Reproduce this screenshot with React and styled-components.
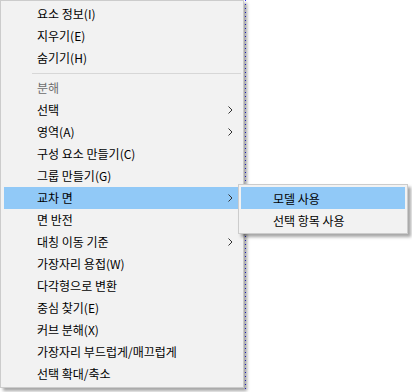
import React from "react";
import styled, { createGlobalStyle } from "styled-components";

const items = [
  { label: "요소 정보(I)" },
  { label: "지우기(E)" },
  { label: "숨기기(H)" },
  { separator: true },
  { label: "분해", disabled: true },
  { label: "선택", sub: true },
  { label: "영역(A)", sub: true },
  { label: "구성 요소 만들기(C)" },
  { label: "그룹 만들기(G)" },
  { label: "교차 면", sub: true, active: true },
  { label: "면 반전" },
  { label: "대칭 이동 기준", sub: true },
  { label: "가장자리 용접(W)" },
  { label: "다각형으로 변환" },
  { label: "중심 찾기(E)" },
  { label: "커브 분해(X)" },
  { label: "가장자리 부드럽게/매끄럽게" },
  { label: "선택 확대/축소" },
];

const subItems = [
  { label: "모델 사용", active: true },
  { label: "선택 항목 사용" },
];

const Chevron = () => (
  <svg width="5" height="8" viewBox="0 0 5 8">
    <polyline points="0.5,0.5 4,4 0.5,7.5" fill="none" stroke="#333" strokeWidth="1" />
  </svg>
);

const App = () => {
  return (
    <>
      <GlobalStyle />
      <Stage>
        <Menu>
          {items.map((item, i) =>
            item.separator ? (
              <Separator key={i} />
            ) : (
              <Item key={i} active={item.active} disabled={item.disabled}>
                <span>{item.label}</span>
                {item.sub && <Chevron />}
              </Item>
            )
          )}
        </Menu>
        <SubMenu>
          {subItems.map((item) => (
            <SubItem key={item.label} active={item.active}>
              {item.label}
            </SubItem>
          ))}
        </SubMenu>
      </Stage>
    </>
  );
};

export default App;

const GlobalStyle = createGlobalStyle`
  html, body {
    margin: 0;
    padding: 0;
    background: #ffffff;
  }
  body {
    font-family: "Noto Sans CJK KR", "Noto Sans", sans-serif;
    font-size: 12px;
  }
`;

const Stage = styled.div`
  position: relative;
  width: 412px;
  height: 392px;
  overflow: hidden;
  background:
    repeating-linear-gradient(to bottom, #2a2aff 0 1px, transparent 1px 4px) 245px 0 / 1px 100% no-repeat,
    #ffffff;
`;

const Menu = styled.div`
  box-sizing: border-box;
  width: 244px;
  height: 388px;
  padding: 2px 2px 2px 3px;
  background: #f2f2f2;
  border: 1px solid #cccccc;
  box-shadow: 3px 3px 3px rgba(0, 0, 0, 0.35);
  display: flex;
  flex-direction: column;
`;

const Item = styled.div`
  height: 22px;
  flex-shrink: 0;
  display: flex;
  align-items: center;
  justify-content: space-between;
  padding: 0 8px 0 33px;
  color: ${({ disabled }) => (disabled ? "#6d6d6d" : "#000000")};
  background: ${({ active }) => (active ? "#91c9f7" : "transparent")};
  white-space: nowrap;
  line-height: 22px;
`;

const Separator = styled.div`
  height: 1px;
  flex-shrink: 0;
  margin: 4px 0 3px 28px;
  background: #d7d7d7;
`;

const SubMenu = styled.div`
  position: absolute;
  left: 238px;
  top: 184px;
  box-sizing: border-box;
  width: 170px;
  height: 50px;
  padding: 2px;
  background: #f2f2f2;
  border: 1px solid #cccccc;
  box-shadow: 3px 3px 3px rgba(0, 0, 0, 0.35);
  display: flex;
  flex-direction: column;
`;

const SubItem = styled.div`
  height: 22px;
  display: flex;
  align-items: center;
  padding-left: 32px;
  color: #000000;
  background: ${({ active }) => (active ? "#91c9f7" : "transparent")};
  white-space: nowrap;
`;
